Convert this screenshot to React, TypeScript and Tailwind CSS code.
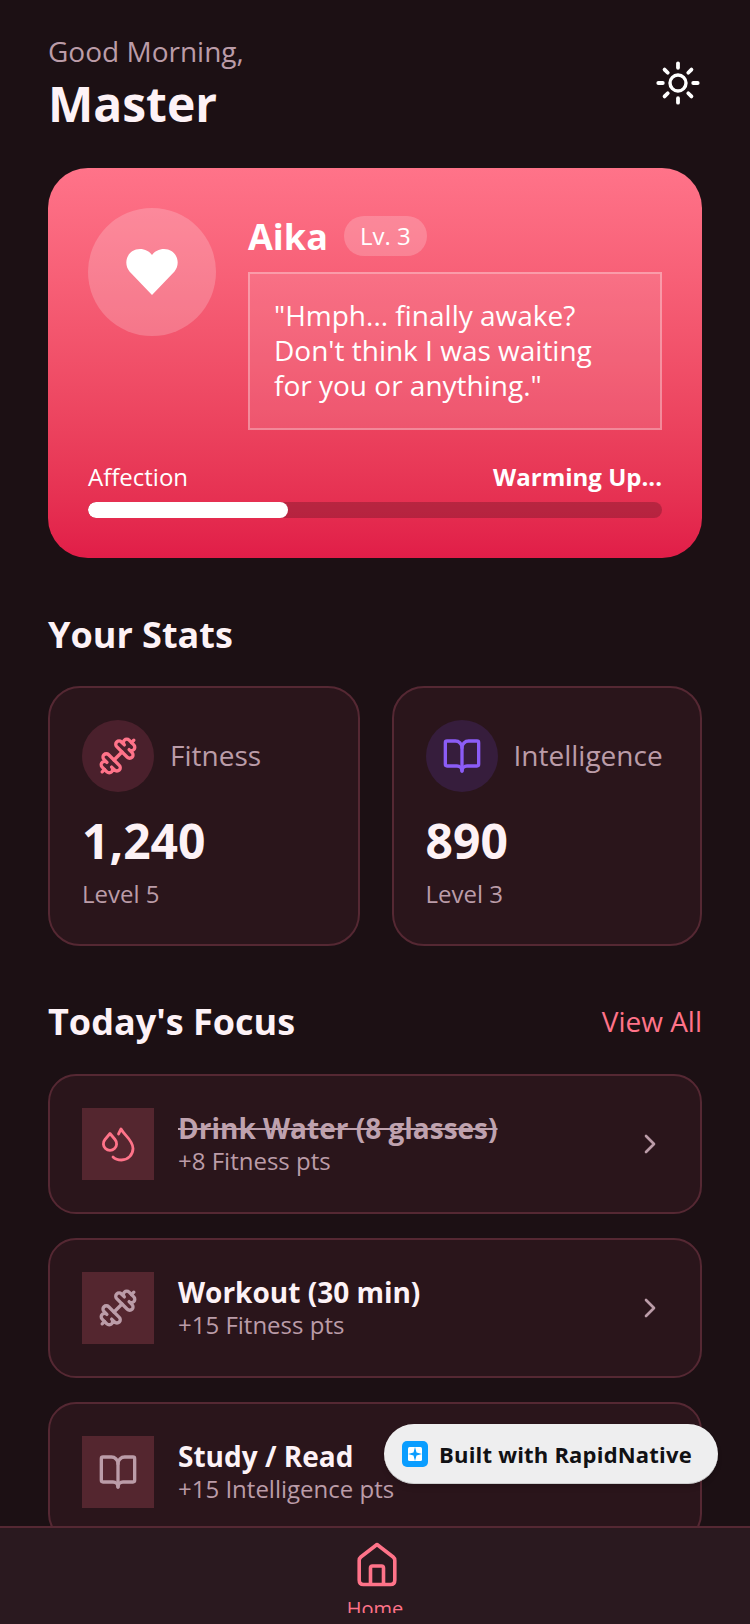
import { BookOpen, ChevronRight, Dumbbell } from 'lucide-react';
import type { ReactNode } from 'react';

const font = { fontFamily: '"Open Sans", sans-serif' };

function SunIcon() {
  const rays = [0, 90, 180, 270];
  const diagonals = [45, 135, 225, 315];
  return (
    <svg viewBox="0 0 48 48" className="h-[48px] w-[48px] shrink-0" fill="none" stroke="#fff" strokeLinecap="round">
      <circle cx="24" cy="24" r="8" strokeWidth="3.4" />
      {rays.map((r) => (
        <line key={r} x1="24" y1="4.3" x2="24" y2="8.8" strokeWidth="3.8" transform={`rotate(${r} 24 24)`} />
      ))}
      {diagonals.map((r) => (
        <line key={r} x1="24" y1="5" x2="24" y2="9.5" strokeWidth="3.8" transform={`rotate(${r} 24 24)`} />
      ))}
    </svg>
  );
}

function DropsIcon() {
  return (
    <svg viewBox="0 0 40 40" className="h-[40px] w-[40px]" fill="none" stroke="#ff7389" strokeWidth="2.8" strokeLinecap="round" strokeLinejoin="round">
      <path d="M12 9.5 L17 15.5 A6.6 6.6 0 1 1 7 15.5 Z" />
      <path d="M20.5 10 L23 5 C26 11 35 16 35 24.5 A11.5 11.5 0 0 1 23.5 36 C20 36 17 35 15 33" />
    </svg>
  );
}

function HomeIcon() {
  return (
    <svg viewBox="0 0 48 48" className="ml-[3px] h-[48px] w-[48px] shrink-0" fill="none" stroke="#ff7389" strokeWidth="3.6" strokeLinecap="round" strokeLinejoin="round">
      <path d="M24 4.5 L7.8 17 Q6.2 18.3 6.2 20.5 V40 Q6.2 44.5 10.5 44.5 H37.5 Q41.8 44.5 41.8 40 V20.5 Q41.8 18.3 40.2 17 Z" />
      <path d="M17.5 44 V28 Q17.5 26 19.5 26 H28.5 Q30.5 26 30.5 28 V44" />
    </svg>
  );
}

function StatCard({
  icon,
  iconBg,
  label,
  value,
  level,
}: {
  icon: ReactNode;
  iconBg: string;
  label: string;
  value: string;
  level: string;
}) {
  return (
    <div className="h-[260px] rounded-[32px] border-2 border-[#552833] bg-[#2a151b] px-[32px] pt-[32px]">
      <div className="flex items-center gap-4">
        <div className={`flex h-[72px] w-[72px] items-center justify-center rounded-full ${iconBg}`}>{icon}</div>
        <span className="mb-[2px] text-[28px] leading-[36px] text-[#bb9ca8]">{label}</span>
      </div>
      <p className="mt-[19px] text-[48px] leading-[60px] font-bold text-[#fdf2f6]">{value}</p>
      <p className="mt-[7px] text-[24px] leading-[32px] text-[#bb9ca8]">{level}</p>
    </div>
  );
}

function TaskRow({ icon, title, pts, done }: { icon: ReactNode; title: string; pts: string; done?: boolean }) {
  return (
    <div className="flex h-[140px] shrink-0 items-center rounded-[28px] border-2 border-[#552833] bg-[#2a151b] px-[32px]">
      <div className="flex h-[72px] w-[72px] items-center justify-center bg-[#54262f]">{icon}</div>
      <div className="ml-6 flex-1">
        <p className={`text-[28px] leading-[34px] font-bold ${done ? 'text-[#bfa2ae] line-through' : 'text-[#fdf2f6]'}`}>
          {title}
        </p>
        <p className="text-[24px] leading-[32px] text-[#bb9ca8]">{pts}</p>
      </div>
      <ChevronRight className="mr-[2px] h-[32px] w-[32px] text-[#bb9ca8]" strokeWidth={2} />
    </div>
  );
}

export default function App() {
  return (
    <div className="relative flex h-[1624px] w-[750px] flex-col overflow-hidden bg-[#1c1014]" style={font}>
      <main className="min-h-0 flex-1 overflow-hidden px-[48px] pt-[32px]">
        <header className="flex items-center justify-between">
          <div>
            <p className="-mt-[1px] text-[28px] leading-[40px] text-[#bb9ca8]">Good Morning,</p>
            <h1 className="mt-[3px] text-[48px] leading-[60px] font-bold text-[#fdf2f6]">Master</h1>
          </div>
          <SunIcon />
        </header>

        <section className="mt-[34px] h-[390px] rounded-[40px] bg-gradient-to-b from-[#ff7389] to-[#e11d48] p-[40px]">
          <div className="flex gap-[32px]">
            <div className="flex h-[128px] w-[128px] shrink-0 items-center justify-center rounded-full bg-white/20">
              <svg viewBox="0 0 52 46" className="h-[46px] w-[52px]" fill="#fff">
                <path d="M26 46 L3.5 22.5 C-3.5 14 1.5 0 14 0 C19 0 23.5 2.5 26 6 C28.5 2.5 33 0 38 0 C50.5 0 55.5 14 48.5 22.5 Z" />
              </svg>
            </div>
            <div className="flex-1">
              <div className="flex h-[58px] items-center gap-4">
                <span className="text-[36px] leading-[48px] font-bold text-white">Aika</span>
                <span className="mb-[2px] rounded-[20px] bg-white/20 px-4 py-[4px] text-[24px] leading-[32px] text-white">Lv. 3</span>
              </div>
              <div className="mt-[6px] h-[158px] border-2 border-white/30 bg-white/10 px-[24px] pt-[24px] text-[28px] leading-[35px] text-white">
                "Hmph... finally awake? Don't think I was waiting for you or anything."
              </div>
            </div>
          </div>
          <div className="mt-[31px] flex items-center justify-between">
            <span className="text-[24px] leading-[32px] text-white">Affection</span>
            <span className="text-[24px] leading-[32px] font-bold text-white">Warming Up...</span>
          </div>
          <div className="mt-[9px] h-[16px] overflow-hidden rounded-full bg-black/20">
            <div className="h-full w-[34.8%] rounded-full bg-white" />
          </div>
        </section>

        <h2 className="mt-[53px] text-[36px] leading-[48px] font-bold text-[#fdf2f6]">Your Stats</h2>
        <div className="mt-[27px] grid grid-cols-[311.5px_310.5px] gap-[32px]">
          <StatCard
            icon={<Dumbbell className="h-[40px] w-[40px] text-[#ff7389]" strokeWidth={2} />}
            iconBg="bg-[#4a202c]"
            label="Fitness"
            value="1,240"
            level="Level 5"
          />
          <StatCard
            icon={<BookOpen className="h-[40px] w-[40px] text-[#8b5cf6]" strokeWidth={2} />}
            iconBg="bg-[#361d3c]"
            label="Intelligence"
            value="890"
            level="Level 3"
          />
        </div>

        <div className="mt-[52px] flex items-center justify-between">
          <h2 className="text-[36px] leading-[48px] font-bold text-[#fdf2f6]">Today's Focus</h2>
          <span className="mb-[2px] text-[28px] leading-[36px] text-[#ff7389]">View All</span>
        </div>
        <div className="mt-[28px] flex flex-col gap-[24px]">
          <TaskRow icon={<DropsIcon />} title="Drink Water (8 glasses)" pts="+8 Fitness pts" done />
          <TaskRow
            icon={<Dumbbell className="h-[40px] w-[40px] text-[#bb9ca8]" strokeWidth={2} />}
            title="Workout (30 min)"
            pts="+15 Fitness pts"
          />
          <TaskRow
            icon={<BookOpen className="h-[40px] w-[40px] text-[#bb9ca8]" strokeWidth={2} />}
            title="Study / Read"
            pts="+15 Intelligence pts"
          />
        </div>
      </main>

      <nav className="h-[98px] shrink-0 border-t-2 border-[#552833] bg-[#2a191f]">
        <div className="flex h-[85px] flex-col items-center overflow-hidden pt-[12px]">
          <HomeIcon />
          <span className="mt-[7px] shrink-0 text-[20px] leading-[28px] text-[#ff7389]">Home</span>
        </div>
      </nav>

      <div className="absolute top-[1424px] left-[384px] flex h-[60px] w-[334px] items-center gap-[11px] rounded-full border-b border-[#cfcfd0] bg-[#eeeeef] pl-[18px] shadow-md">
        <svg viewBox="0 0 26 26" className="h-[26px] w-[26px]">
          <rect width="26" height="26" rx="5" fill="#0a9dff" />
          <rect x="6" y="6" width="14" height="14" rx="1.5" fill="#fff" />
          <path d="M13 6 L14.5 11.5 L20 13 L14.5 14.5 L13 20 L11.5 14.5 L6 13 L11.5 11.5 Z" fill="#0a9dff" />
        </svg>
        <span className="text-[22px] leading-[30px] font-bold tracking-[0.2px] text-[#111114]">Built with RapidNative</span>
      </div>
    </div>
  );
}
